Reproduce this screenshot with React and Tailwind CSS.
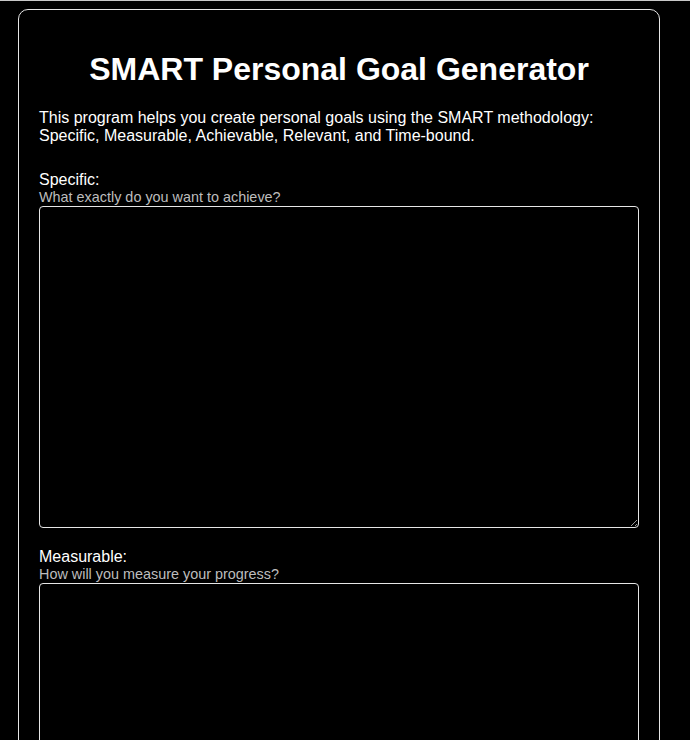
import React from "react";

const fields = [
  { id: "specific", label: "Specific:", hint: "What exactly do you want to achieve?" },
  { id: "measurable", label: "Measurable:", hint: "How will you measure your progress?" },
  { id: "achievable", label: "Achievable:", hint: "Is this goal realistic for you?" },
];

export default function App() {
  return (
    <div className="min-h-screen bg-black border-t border-[#c8c8c8] font-['Liberation_Sans',Arial,sans-serif] text-white">
      <div className="ml-[18px] mt-[8px] w-[642px] rounded-[10px] border border-[#e6e6e6] p-5">
        <h1 className="mt-[21px] mb-[21px] text-center text-[32px] font-bold leading-[37px]">
          SMART Personal Goal Generator
        </h1>
        <p className="mb-[26px] text-base leading-[18px]">
          This program helps you create personal goals using the SMART methodology:
          Specific, Measurable, Achievable, Relevant, and Time-bound.
        </p>

        {fields.map((f) => (
          <div key={f.id} className="mb-5">
            <label htmlFor={f.id} className="block text-base leading-[18px]">
              {f.label}
            </label>
            <div className="text-[14.4px] leading-[17px] text-[#bdbdbd]">{f.hint}</div>
            <textarea
              id={f.id}
              className="block h-[322px] w-full rounded-[4px] border border-[#e6e6e6] bg-black p-2 text-white outline-none"
            />
          </div>
        ))}
      </div>
    </div>
  );
}
